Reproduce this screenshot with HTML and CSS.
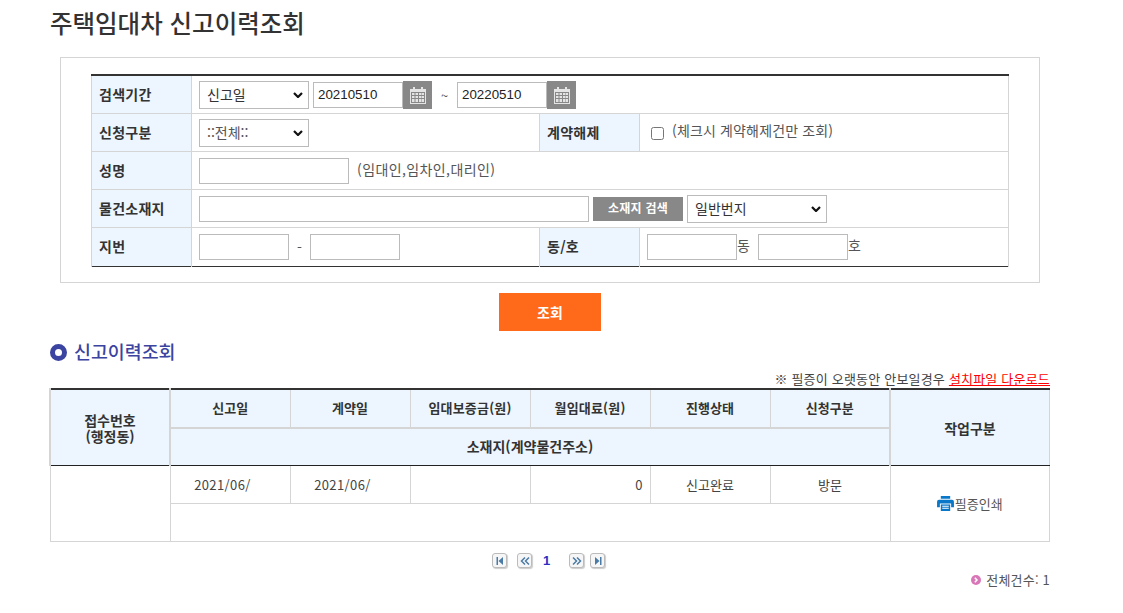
FILE: index.html
```html
<!DOCTYPE html>
<html lang="ko">
<head>
<meta charset="utf-8">
<title>주택임대차 신고이력조회</title>
<link rel="stylesheet" href="styles.css">
</head>
<body>
<main class="page">
  <h1 class="title">주택임대차 신고이력조회</h1>
  <section class="search-box">
    <table class="form-table">
      <colgroup><col class="c-label"><col class="c-mid"><col class="c-label2"><col></colgroup>
      <tbody>
        <tr>
          <th>검색기간</th>
          <td colspan="3">
            <div class="line">
              <select class="sel sel-110"><option>신고일</option></select>
              <span class="date"><input class="inp inp-date" value="20210510"><button type="button" class="cal"><svg viewBox="0 0 18 18" width="18" height="18"><use href="#cal"/></svg></button></span>
              <span class="tilde">~</span>
              <span class="date"><input class="inp inp-date" value="20220510"><button type="button" class="cal"><svg viewBox="0 0 18 18" width="18" height="18"><use href="#cal"/></svg></button></span>
            </div>
          </td>
        </tr>
        <tr>
          <th>신청구분</th>
          <td><div class="line"><select class="sel sel-110 muted"><option>::전체::</option></select></div></td>
          <th>계약해제</th>
          <td><div class="line"><input type="checkbox" class="chk"><span class="hint hint-up">(체크시 계약해제건만 조회)</span></div></td>
        </tr>
        <tr>
          <th>성명</th>
          <td colspan="3"><div class="line"><input class="inp inp-150"><span class="hint hint-name">(임대인,임차인,대리인)</span></div></td>
        </tr>
        <tr>
          <th>물건소재지</th>
          <td colspan="3">
            <div class="line">
              <input class="inp inp-390">
              <button type="button" class="addr-btn">소재지 검색</button>
              <select class="sel sel-140"><option>일반번지</option></select>
            </div>
          </td>
        </tr>
        <tr class="last-row">
          <th>지번</th>
          <td><div class="line"><input class="inp inp-90"><span class="dash">-</span><input class="inp inp-90"></div></td>
          <th>동/호</th>
          <td><div class="line"><input class="inp inp-90"><span class="unit">동</span><input class="inp inp-90 unit-next"><span class="unit">호</span></div></td>
        </tr>
      </tbody>
    </table>
  </section>
  <div class="actions"><button type="button" class="query">조회</button></div>
  <h2 class="section"><span class="ring"></span><span class="section-text">신고이력조회</span></h2>
  <p class="notice">※ 필증이 오랫동안 안보일경우 <a href="#">설치파일 다운로드</a></p>
  <table class="result">
    <colgroup><col class="w120"><col class="w120"><col class="w120"><col class="w120"><col class="w120"><col class="w120"><col class="w120"><col></colgroup>
    <thead>
      <tr class="head-top">
        <th rowspan="2" class="edge big">접수번호<br>(행정동)</th>
        <th>신고일</th><th>계약일</th><th class="wide">임대보증금(원)</th><th class="wide">월임대료(원)</th><th>진행상태</th><th>신청구분</th>
        <th rowspan="2" class="edge big">작업구분</th>
      </tr>
      <tr><th colspan="6" class="addr big">소재지(계약물건주소)</th></tr>
    </thead>
    <tbody>
      <tr>
        <td rowspan="2"></td>
        <td class="day">2021/06/</td><td class="day">2021/06/</td><td></td><td class="num">0</td><td>신고완료</td><td>방문</td>
        <td rowspan="2"><span class="print"><svg viewBox="0 0 18 16" width="17" height="15"><path fill="#0a78c8" d="M4 0h10v3H4zM2 4h14a2 2 0 0 1 2 2v6h-3V8H3v4H0V6a2 2 0 0 1 2-2z"/><path fill="#0a78c8" d="M4 9h10v7H4z"/><path fill="#fff" d="M5.500 10.500h7v1h-7zM5.500 12.500h7v1h-7z"/></svg>필증인쇄</span></td>
      </tr>
      <tr><td colspan="6"></td></tr>
    </tbody>
  </table>
  <nav class="pager">
    <button type="button" class="pg"><svg viewBox="0 0 10 10" width="10" height="10"><path fill="#4a7ba6" d="M1.500 1h1.500v8H1.500zM8 1v8L3.500 5z"/></svg></button>
    <button type="button" class="pg pg-gap"><svg viewBox="0 0 10 10" width="10" height="10"><path fill="none" stroke="#4a7ba6" stroke-width="1.500" d="M5 1.500L1.500 5 5 8.500M9 1.500L5.500 5 9 8.500"/></svg></button>
    <span class="cur">1</span>
    <button type="button" class="pg pg-next"><svg viewBox="0 0 10 10" width="10" height="10"><path fill="none" stroke="#4a7ba6" stroke-width="1.500" d="M1 1.500L4.500 5 1 8.500M5 1.500L8.500 5 5 8.500"/></svg></button>
    <button type="button" class="pg"><svg viewBox="0 0 10 10" width="10" height="10"><path fill="#4a7ba6" d="M2 1v8l4.500-4zM7 1h1.500v8H7z"/></svg></button>
  </nav>
  <p class="total"><svg class="dot" viewBox="0 0 10 10" width="10" height="10"><circle cx="5" cy="5" r="5" fill="#d877b8"/><path fill="none" stroke="#fff" stroke-width="1.500" d="M3.800 2.800L6 5 3.800 7.200"/></svg>전체건수: 1</p>
</main>
<svg width="0" height="0" class="defs">
  <symbol id="cal" viewBox="0 0 18 18">
    <path fill="#e4e4e4" d="M1 3h3V1h2v2h6V1h2v2h3v15H1z"/>
    <path fill="#888" d="M2 6h14v11H2z"/>
    <path fill="#e4e4e4" d="M3 7h2.500v2H3zM6.500 7H9v2H6.500zM10 7h2.500v2H10zM13 7h2v2h-2zM3 10h2.500v2H3zM6.500 10H9v2H6.500zM10 10h2.500v2H10zM13 10h2v2h-2zM3 13h2.500v3H3zM6.500 13H9v3H6.500zM10 13h2.500v3H10zM13 13h2v3h-2z"/>
  </symbol>
</svg>
</body>
</html>
```
FILE: styles.css
```css
* { box-sizing: border-box; }
html, body { margin: 0; padding: 0; background: #fff; overflow: hidden; }
body {
  font-family: "Noto Sans CJK KR", "Noto Sans", "Liberation Sans", sans-serif;
  font-size: 14px;
  color: #333;
}
.defs { position: absolute; }
.page { width: 1000px; margin-left: 50px; }
.title {
  margin: 0;
  height: 57px;
  padding-top: 5px;
  font-size: 24.5px;
  line-height: 36px;
  font-weight: 500;
  color: #333;
}
.search-box {
  margin-left: 10px;
  width: 980px;
  height: 226px;
  padding: 16px 30px 0 30px;
  border: 1px solid #d5d5d5;
}
.form-table {
  width: 918px;
  table-layout: fixed;
  border-collapse: collapse;
  border-top: 2px solid #333;
  border-bottom: 1px solid #333;
}
.c-label { width: 100px; }
.c-mid { width: 348px; }
.c-label2 { width: 100px; }
.form-table th, .form-table td {
  height: 38px;
  padding: 0 0 0 7px;
  border: 1px solid #d5d5d5;
  text-align: left;
  font-size: 14px;
  font-weight: 700;
}
.form-table .last-row th, .form-table .last-row td { height: 39px; padding-bottom: 1px; }
.form-table tr:first-child th, .form-table tr:first-child td { border-top: 0; }
.form-table tr:last-child th, .form-table tr:last-child td { border-bottom: 0; }
.form-table th { background: #edf6fe; color: #333; letter-spacing: 0.25px; }
.form-table td { font-weight: 400; }
.line { display: flex; align-items: center; height: 28px; margin-top: 2px; }
.form-table .last-row .line { margin-top: 1px; }
.sel {
  appearance: none;
  height: 28px;
  padding: 0 0 3px 7px;
  border: 1px solid #bbb;
  border-radius: 0;
  background: #fff url("data:image/svg+xml,%3Csvg xmlns='http://www.w3.org/2000/svg' width='10' height='6'%3E%3Cpath fill='none' stroke='%23111' stroke-width='2.200' d='M1 1l4 4 4-4'/%3E%3C/svg%3E") no-repeat right 5px center;
  font: 14px "Noto Sans CJK KR", sans-serif;
  color: #333;
}
.sel-110 { width: 110px; margin-right: 4px; }
.sel-140 { width: 140px; margin-left: 4px; }
.muted { color: #555; }
.inp {
  height: 26px;
  padding: 0 4px 2px;
  border: 1px solid #bbb;
  border-radius: 0;
  background: #fff;
  font: 13.333px "Liberation Sans", sans-serif;
  color: #222;
  outline: 0;
}
.inp-date { width: 90px; }
.inp-150 { width: 150px; }
.inp-390 { width: 390px; }
.inp-90 { width: 90px; }
.date { display: flex; align-items: center; }
.cal {
  width: 29px;
  height: 28px;
  padding: 0;
  border: 0;
  background: #888;
  display: flex;
  align-items: center;
  justify-content: center;
}
.tilde { width: 25px; text-align: center; color: #555; font-size: 13px; }
.chk { width: 13px; height: 13px; margin: 0 0 0 4px; }
.hint { color: #555; font-size: 14px; }
.hint-up { margin: -6px 0 0 8px; letter-spacing: 0.15px; }
.hint-name { margin: -4px 0 0 8px; letter-spacing: 0.4px; }
.addr-btn {
  width: 90px;
  height: 24px;
  margin-left: 4px;
  padding: 0 0 4px;
  border: 0;
  background: #888;
  color: #fff;
  font: 700 12px "Noto Sans CJK KR", sans-serif;
  letter-spacing: 0.2px;
}
.dash { width: 21px; text-align: center; color: #555; }
.unit { color: #555; font-size: 14px; margin-top: -3px; }
.unit-next { margin-left: 8px; }
.actions { display: flex; justify-content: center; margin-top: 10px; }
.query {
  width: 102px;
  height: 38px;
  border: 0;
  padding: 0;
  background: #ff6a1a;
  color: #fff;
  font: 700 14px "Noto Sans CJK KR", sans-serif;
}
.section {
  display: flex;
  align-items: center;
  gap: 7px;
  height: 26px;
  margin: 8px 0 0;
  font-size: 18.4px;
  font-weight: 500;
  color: #3b44a0;
}
.section-text { margin-top: -2px; }
.ring {
  width: 17px;
  height: 17px;
  border: 5px solid #3b44a0;
  border-radius: 50%;
}
.notice {
  margin: 6px 0 0;
  height: 17px;
  line-height: 16px;
  text-align: right;
  font-size: 13px;
  letter-spacing: 0.2px;
  color: #444;
}
.notice a { color: #f00; }
.result {
  width: 1001px;
  margin-left: -1px;
  table-layout: fixed;
  border-collapse: collapse;
  border-top: 2px solid #333;
  font-size: 13px;
}
.w120 { width: 120px; }
.result th, .result td {
  border: 1px solid #d5d5d5;
  text-align: center;
  padding: 0;
}
.result th {
  height: 38px;
  background: #edf6fe;
  font-size: 13px;
  font-weight: 700;
  line-height: 17px;
  color: #333;
}
.result .head-top th { height: 39px; padding-bottom: 2px; }
.result th.big { font-size: 14px; }
.result th.wide { letter-spacing: 0.2px; }
.result thead tr:first-child th { border-top: 0; }
.result th.edge { border-left-width: 2px; border-right-width: 2px; border-bottom: 1px solid #222; }
.result .head-top th.edge { padding: 2px 0 0; line-height: 16px; }
.result th.edge:last-child { border-left-width: 2px; border-right-width: 1px; }
.result th.edge:first-child { border-left-width: 2px; }
.result th.addr { height: 37px; border-top: 2px solid #d5d5d5; border-bottom: 1px solid #222; }
.result td { height: 38px; color: #444; font-size: 13px; }
.result td.day { padding-right: 15px; letter-spacing: 0.4px; }
.result td.num { text-align: right; padding-right: 7px; }
.print { display: inline-flex; align-items: center; justify-content: center; color: #555; padding-top: 3px; }
.print svg { margin-right: 1px; }
.pager {
  display: flex;
  justify-content: center;
  align-items: center;
  height: 16px;
  margin-top: 11px;
  padding-right: 3px;
}
.pg {
  width: 15px;
  height: 15px;
  padding: 0;
  border: 1px solid #bbb;
  border-radius: 3px;
  background: #f6f6f6;
  box-shadow: 1px 1px 1px #ccc;
  display: flex;
  align-items: center;
  justify-content: center;
}
.pg-gap { margin: 0 0 0 10px; }
.pg-next { margin-right: 6px; }
.cur { width: 37px; padding-left: 11px; color: #2a2fc0; font: 700 13px "Liberation Sans", sans-serif; }
.total {
  display: flex;
  justify-content: flex-end;
  align-items: center;
  margin: 2px 0 0;
  height: 18px;
  font-size: 13px;
  letter-spacing: 0.2px;
  color: #555;
}
.dot { margin-right: 5px; }
```
